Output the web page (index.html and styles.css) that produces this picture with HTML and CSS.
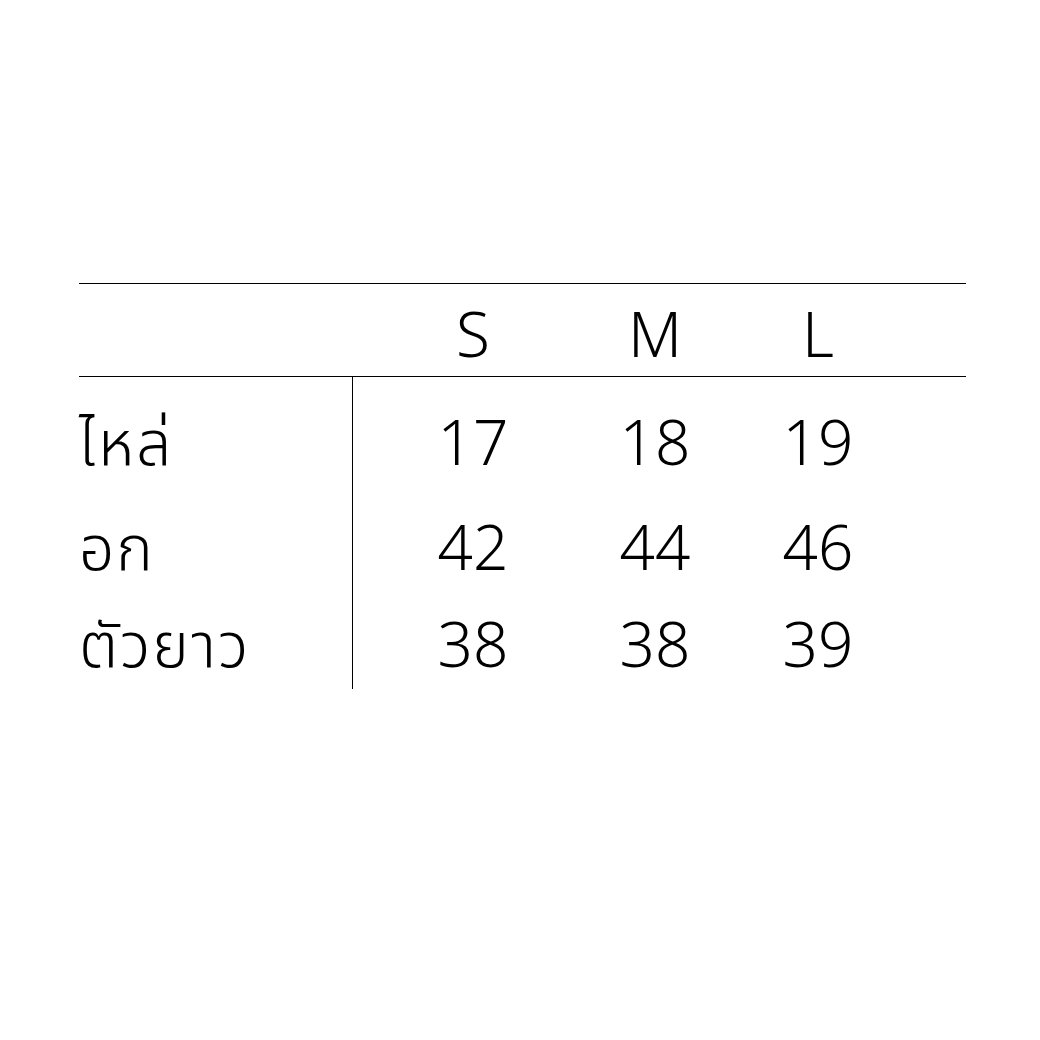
FILE: index.html
```html
<!DOCTYPE html>
<html lang="th">
<head>
<meta charset="utf-8">
<title>Size chart</title>
<link rel="stylesheet" href="styles.css">
</head>
<body>
<div class="chart">
  <div class="head">
    <div class="label"></div>
    <div class="cell">S</div>
    <div class="cell">M</div>
    <div class="cell">L</div>
  </div>
  <div class="body">
    <div class="row r1">
      <div class="label">ไหล่</div>
      <div class="cell">17</div>
      <div class="cell">18</div>
      <div class="cell">19</div>
    </div>
    <div class="row r2">
      <div class="label">อก</div>
      <div class="cell">42</div>
      <div class="cell">44</div>
      <div class="cell">46</div>
    </div>
    <div class="row r3">
      <div class="label">ตัวยาว</div>
      <div class="cell">38</div>
      <div class="cell">38</div>
      <div class="cell">39</div>
    </div>
  </div>
</div>
</body>
</html>
```

FILE: styles.css
```css
html, body {
  margin: 0;
  padding: 0;
  background: #fff;
}
body {
  width: 1040px;
  height: 1040px;
  font-family: "Noto Sans", "Noto Sans Thai", "Noto Sans Thai Looped", sans-serif;
  font-weight: 300;
  font-size: 62px;
  line-height: 62px;
  color: #000;
}
.chart {
  padding: 283px 74px 0 79px;
}
.head,
.row {
  display: grid;
  grid-template-columns: 274px 240px 124px 202px 1fr;
}
.head {
  border-top: 1px solid #000;
  border-bottom: 1px solid #000;
  padding: 18px 0 12px;
}
.row > div {
  height: 62px;
}
.row .label {
  border-right: 1px solid #000;
  letter-spacing: 2px;
}
.r1 > div { padding-top: 33px; padding-bottom: 10px; }
.r2 > div { padding-top: 33px; padding-bottom: 0; }
.r3 > div { padding-top: 35px; padding-bottom: 15px; }
.cell {
  text-align: center;
}
.label {
  white-space: nowrap;
}
```
